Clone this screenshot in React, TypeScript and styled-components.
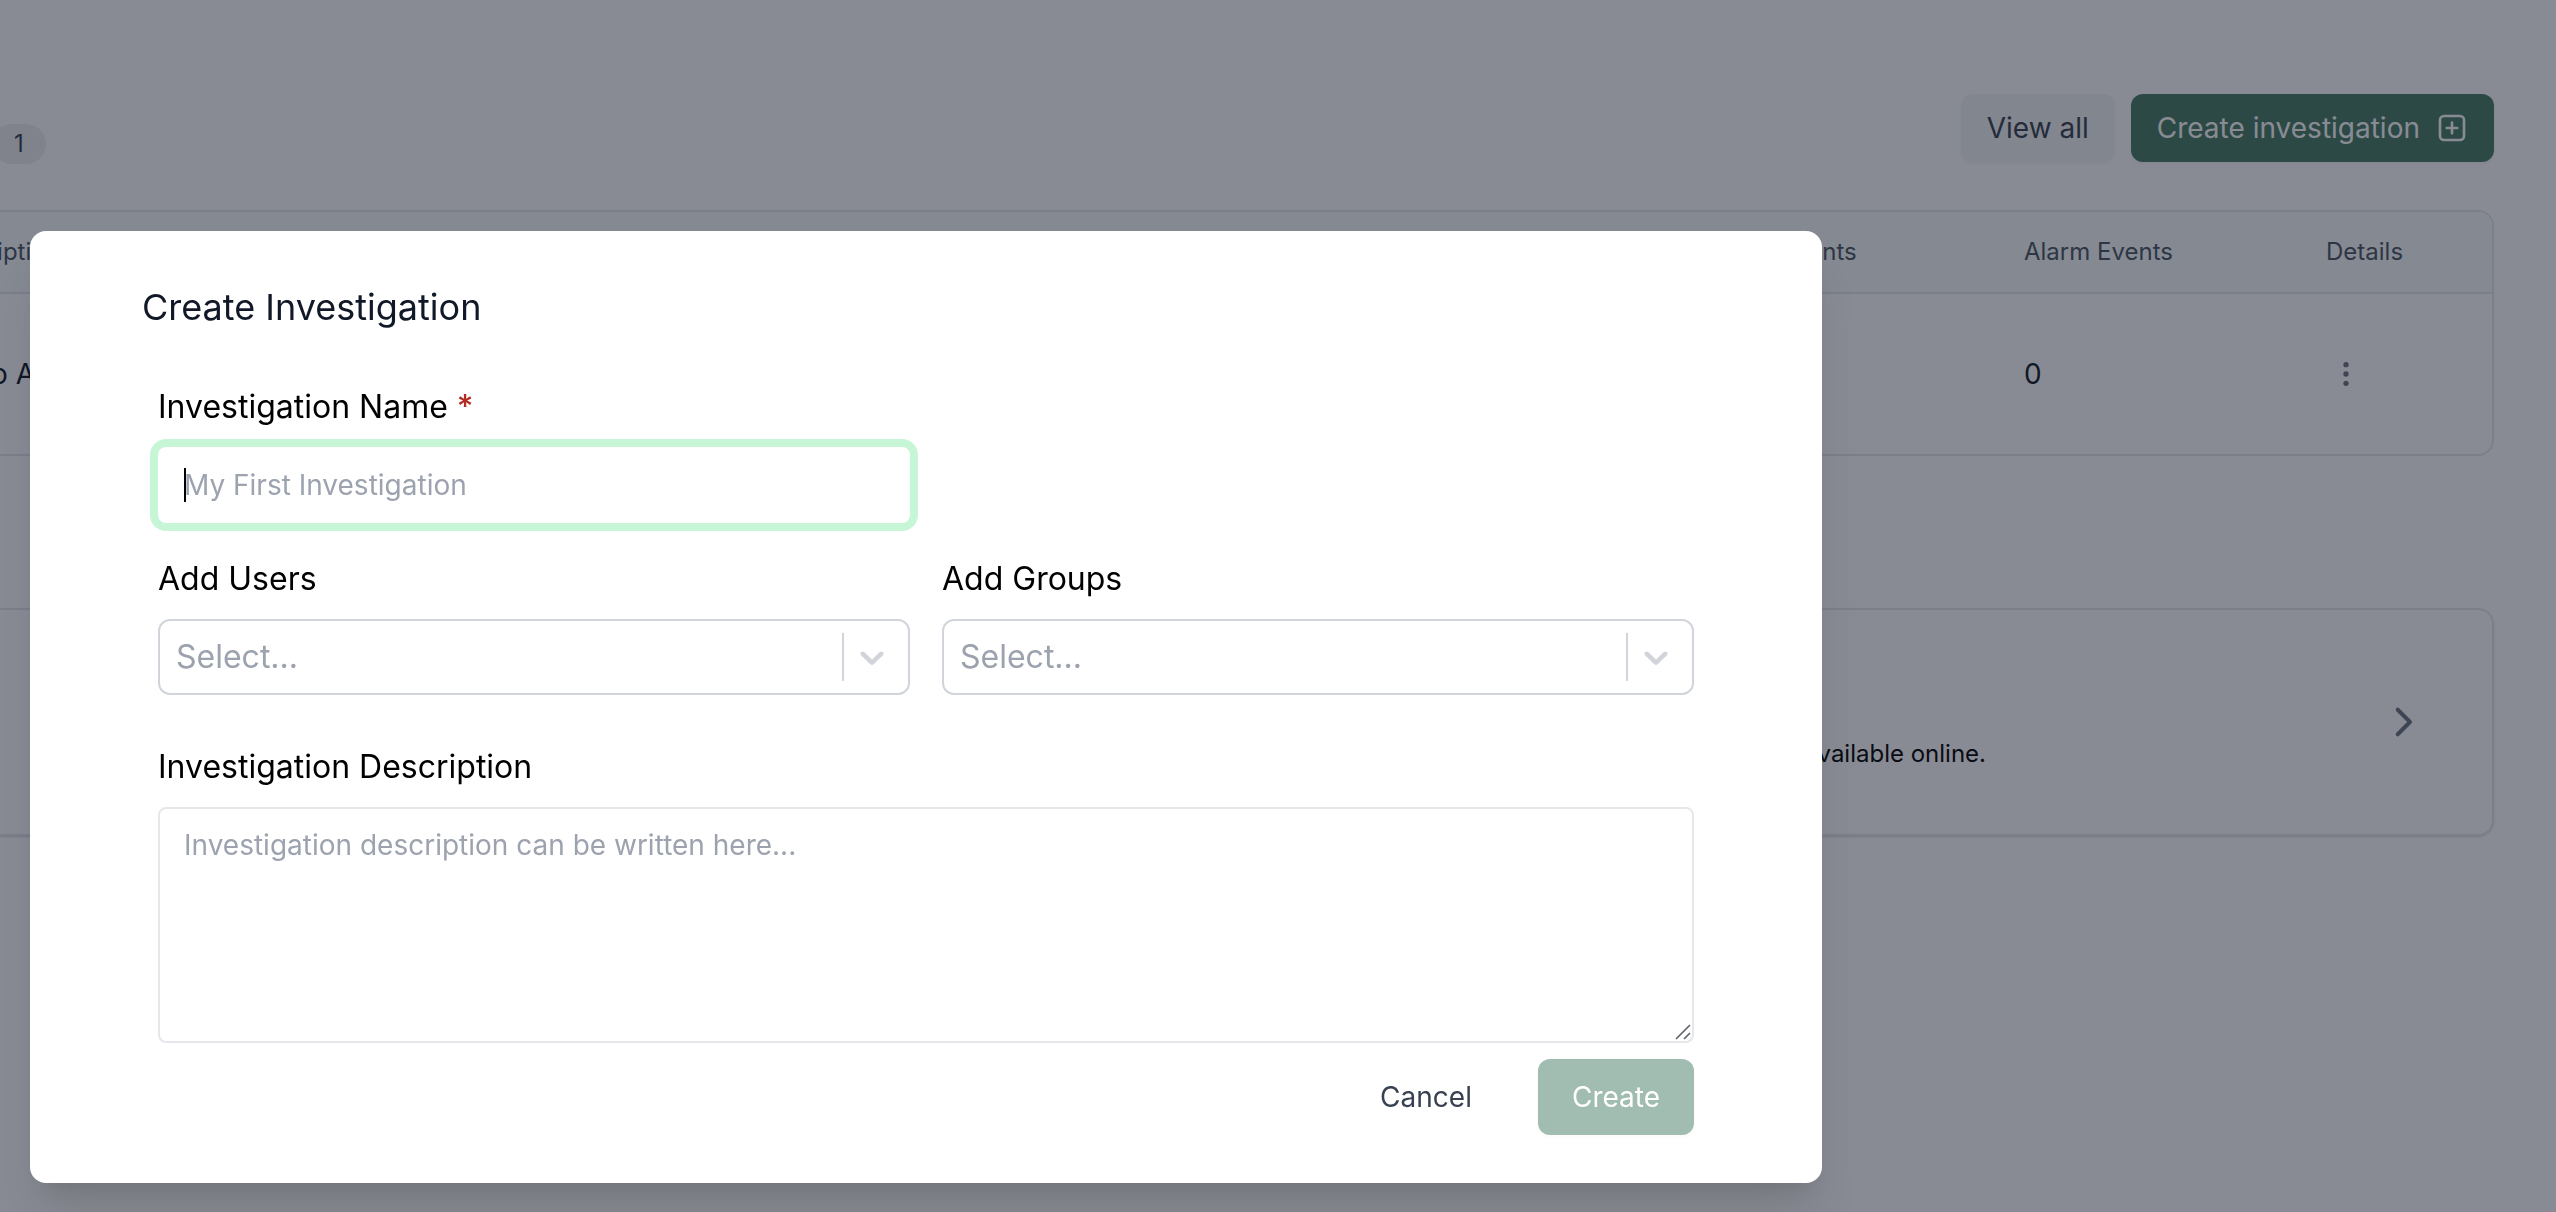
import React from "react";
import styled, { createGlobalStyle, css } from "styled-components";

const GlobalStyle = createGlobalStyle`
  *, *::before, *::after { box-sizing: border-box; }
  html, body { margin: 0; height: 100%; }
  body {
    overflow: hidden;
    background: #ffffff;
    color: #111827;
    font-family: Inter, "Liberation Sans", sans-serif;
    font-size: 28px;
    line-height: 40px;
  }
  button, input, textarea, select { font: inherit; }
`;

const Page = styled.main`
  padding: 94px 62px 0 0;
  margin-left: -120px;
`;

const PageHeader = styled.header`
  display: flex;
  justify-content: space-between;
  align-items: flex-end;
  padding-left: 112px;
  margin-bottom: 46px;
`;

const Badge = styled.span`
  width: 54px;
  border-radius: 20px;
  background: #eeeff1;
  color: #374151;
  font-size: 24px;
  line-height: 40px;
  text-align: center;
`;

const Actions = styled.div`
  display: flex;
  gap: 16px;
  padding-bottom: 2px;
`;

const Button = styled.button<{ $kind: "primary" | "soft" | "plain"; $large?: boolean }>`
  display: inline-flex;
  align-items: center;
  gap: 16px;
  height: ${(p) => (p.$large ? 76 : 68)}px;
  padding: 0 ${(p) => (p.$large ? 34 : 26)}px;
  border: 0;
  border-radius: 12px;
  font-size: 28px;
  line-height: 40px;
  ${(p) =>
    p.$kind === "primary" &&
    css`
      background: #467b63;
      color: #ffffff;
      box-shadow: 0 2px 4px rgba(0, 0, 0, 0.05);
    `}
  ${(p) =>
    p.$kind === "soft" &&
    css`
      background: #f3f5f6;
      color: #374151;
      box-shadow: 0 2px 4px rgba(0, 0, 0, 0.05);
    `}
  ${(p) =>
    p.$kind === "plain" &&
    css`
      background: transparent;
      color: #374151;
    `}
  &:disabled { opacity: 0.5; }
`;

const TableCard = styled.section`
  margin-bottom: 152px;
  overflow: hidden;
  border: 2px solid #e5e7eb;
  border-radius: 16px;
`;

const Table = styled.table`
  width: 100%;
  table-layout: fixed;
  border-collapse: separate;
  border-spacing: 0;
  text-align: left;
`;

const Column = styled.col<{ $width?: number }>`
  width: ${(p) => (p.$width ? `${p.$width}px` : "auto")};
`;

const HeadCell = styled.th`
  height: 82px;
  padding: 0 0 0 48px;
  border-bottom: 2px solid #e5e7eb;
  background: #f9fafb;
  color: #4b5563;
  font-size: 24px;
  line-height: 32px;
  font-weight: 400;
`;

const Cell = styled.td`
  height: 160px;
  padding: 0 0 0 48px;
`;

const IconButton = styled.button`
  display: flex;
  padding: 0 4px;
  border: 0;
  background: transparent;
  color: #6b7280;
`;

const InfoCard = styled.a`
  display: flex;
  align-items: center;
  justify-content: flex-end;
  gap: 396px;
  height: 228px;
  padding: 0 68px;
  border: 2px solid #e5e7eb;
  border-radius: 16px;
  box-shadow: 0 1px 2px rgba(0, 0, 0, 0.16);
  color: #000000;
  text-decoration: none;
`;

const InfoText = styled.span`
  padding-top: 64px;
  font-size: 24px;
  line-height: 32px;
  white-space: nowrap;
`;

const InfoIcon = styled.span`
  display: flex;
  color: #6b7280;
`;

const Overlay = styled.div`
  position: fixed;
  inset: 0;
  padding: 231px 30px 0;
  background: rgba(17, 24, 39, 0.5);
`;

const Modal = styled.form`
  max-width: 1792px;
  padding: 48px 128px;
  border-radius: 16px;
  background: #ffffff;
  box-shadow: 0 40px 50px -10px rgba(0, 0, 0, 0.1), 0 16px 20px -12px rgba(0, 0, 0, 0.1);
`;

const ModalTitle = styled.h2`
  margin: 0 -16px 48px;
  color: #111827;
  font-size: 36px;
  line-height: 56px;
  font-weight: 400;
`;

const Fields = styled.div`
  display: grid;
  grid-template-columns: 1fr 1fr;
  grid-template-areas:
    "name ."
    "users groups"
    "description description";
  gap: 32px;
`;

const Field = styled.div<{ $area: string }>`
  display: flex;
  flex-direction: column;
  gap: 16px;
  grid-area: ${(p) => p.$area};
  padding-top: ${(p) => (p.$area === "description" ? 16 : 0)}px;
`;

const Label = styled.label`
  color: #000000;
  font-size: 32px;
  line-height: 48px;
`;

const Required = styled.span`
  color: #b32b23;
  font-weight: 500;
`;

const ControlWrap = styled.div`
  position: relative;
`;

const TextInput = styled.input`
  display: block;
  width: 100%;
  height: 76px;
  padding: 0 26px;
  border: 0;
  border-radius: 8px;
  outline: none;
  background: #ffffff;
  box-shadow: 0 0 0 8px #c6f6d5;
  caret-color: transparent;
  &::placeholder { color: #9ca3af; opacity: 1; }
`;

const Caret = styled.span`
  position: absolute;
  left: 26px;
  top: 21px;
  width: 2px;
  height: 34px;
  background: #000000;
`;

const SelectBox = styled.div`
  display: flex;
  align-items: center;
  height: 76px;
  padding-right: 16px;
  border: 2px solid #d1d5db;
  border-radius: 12px;
  color: #d1d5db;
`;

const Select = styled.select`
  flex: 1;
  min-width: 0;
  height: 100%;
  padding: 0 16px;
  border: 0;
  outline: none;
  background: transparent;
  appearance: none;
  color: #9ca3af;
  font-size: 32px;
`;

const Divider = styled.span`
  width: 2px;
  height: 48px;
  margin-right: 8px;
  background: #d1d5db;
`;

const TextArea = styled.textarea`
  display: block;
  width: 100%;
  height: 236px;
  padding: 16px 24px;
  border: 2px solid #e5e7eb;
  border-radius: 8px;
  outline: none;
  resize: none;
  &::placeholder { color: #9ca3af; opacity: 1; }
`;

const ResizeGrip = styled.svg`
  position: absolute;
  right: 2px;
  bottom: 2px;
  pointer-events: none;
`;

const Footer = styled.footer`
  display: flex;
  justify-content: flex-end;
  gap: 32px;
  margin-top: 16px;
`;

const PlusSquareIcon = () => (
  <svg width="32" height="32" viewBox="0 0 24 24" fill="none" stroke="currentColor" strokeWidth="2" strokeLinecap="round" aria-hidden="true">
    <rect x="3" y="3" width="18" height="18" rx="3" />
    <path d="M8 12h8M12 8v8" />
  </svg>
);

const DotsIcon = () => (
  <svg width="32" height="32" viewBox="0 0 24 24" fill="currentColor" aria-hidden="true">
    <circle cx="12" cy="5" r="2" />
    <circle cx="12" cy="12" r="2" />
    <circle cx="12" cy="19" r="2" />
  </svg>
);

const ChevronRightIcon = () => (
  <svg width="42" height="42" viewBox="0 0 24 24" fill="none" stroke="currentColor" strokeWidth="2.3" strokeLinecap="round" strokeLinejoin="round" aria-hidden="true">
    <path d="M9 5l7 7-7 7" />
  </svg>
);

const ChevronDownIcon = () => (
  <svg width="40" height="40" viewBox="0 0 20 20" fill="currentColor" aria-hidden="true">
    <path d="M4.516 7.548c0.436-0.446 1.043-0.481 1.576 0l3.908 3.747 3.908-3.747c0.533-0.481 1.141-0.446 1.574 0 0.436 0.445 0.408 1.197 0 1.615-0.406 0.418-4.695 4.502-4.695 4.502-0.217 0.223-0.502 0.335-0.787 0.335s-0.57-0.112-0.789-0.335c0 0-4.287-4.084-4.695-4.502s-0.436-1.17 0-1.615z" />
  </svg>
);

function SelectField({ id, label }: { id: string; label: string }) {
  return (
    <Field $area={id}>
      <Label htmlFor={id}>{label}</Label>
      <SelectBox>
        <Select id={id} defaultValue="">
          <option value="">Select...</option>
        </Select>
        <Divider />
        <ChevronDownIcon />
      </SelectBox>
    </Field>
  );
}

export default function App() {
  return (
    <>
      <GlobalStyle />
      <Page>
        <PageHeader>
          <Badge>1</Badge>
          <Actions>
            <Button type="button" $kind="soft">View all</Button>
            <Button type="button" $kind="primary">
              Create investigation
              <PlusSquareIcon />
            </Button>
          </Actions>
        </PageHeader>

        <TableCard>
          <Table>
            <colgroup>
              <Column />
              <Column $width={305} />
              <Column $width={302} />
              <Column $width={214} />
            </colgroup>
            <thead>
              <tr>
                <HeadCell>Description</HeadCell>
                <HeadCell>Door Events</HeadCell>
                <HeadCell>Alarm Events</HeadCell>
                <HeadCell>Details</HeadCell>
              </tr>
            </thead>
            <tbody>
              <tr>
                <Cell>Demo Alarm</Cell>
                <Cell>0</Cell>
                <Cell>0</Cell>
                <Cell>
                  <IconButton type="button" aria-label="Details">
                    <DotsIcon />
                  </IconButton>
                </Cell>
              </tr>
            </tbody>
          </Table>
        </TableCard>

        <InfoCard href="#guide">
          <InfoText>A guide to investigations is available online.</InfoText>
          <InfoIcon>
            <ChevronRightIcon />
          </InfoIcon>
        </InfoCard>
      </Page>

      <Overlay>
        <Modal role="dialog" aria-labelledby="dialog-title">
          <ModalTitle id="dialog-title">Create Investigation</ModalTitle>
          <Fields>
            <Field $area="name">
              <Label htmlFor="name">
                Investigation Name <Required>*</Required>
              </Label>
              <ControlWrap>
                <TextInput id="name" type="text" placeholder="My First Investigation" />
                <Caret />
              </ControlWrap>
            </Field>
            <SelectField id="users" label="Add Users" />
            <SelectField id="groups" label="Add Groups" />
            <Field $area="description">
              <Label htmlFor="description">Investigation Description</Label>
              <ControlWrap>
                <TextArea id="description" placeholder="Investigation description can be written here..." />
                <ResizeGrip width="18" height="18" viewBox="0 0 18 18" stroke="#5f6368" strokeWidth="1.6" aria-hidden="true">
                  <path d="M2 16L16 2M10 16l6-6" />
                </ResizeGrip>
              </ControlWrap>
            </Field>
          </Fields>
          <Footer>
            <Button type="button" $kind="plain" $large>Cancel</Button>
            <Button type="submit" $kind="primary" $large disabled>Create</Button>
          </Footer>
        </Modal>
      </Overlay>
    </>
  );
}
